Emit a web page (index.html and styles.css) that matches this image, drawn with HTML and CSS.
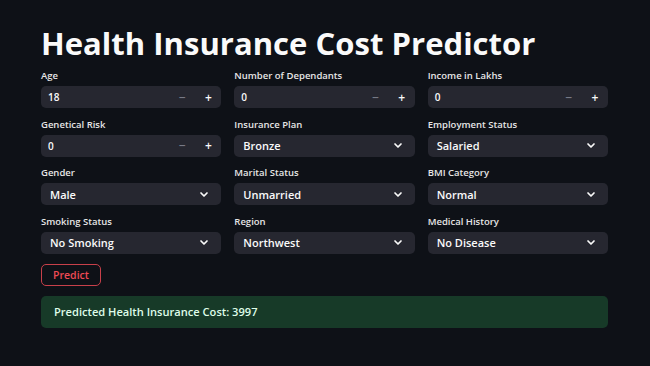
FILE: index.html
```html
<!DOCTYPE html>
<html>
<head>
<meta charset="utf-8">
<link rel="stylesheet" href="styles.css">
</head>
<body>
<main class="app">
  <h1 class="title">Health Insurance Cost Predictor</h1>
  <div class="grid">
    <div class="field">
      <label class="label">Age</label>
      <div class="box num"><span class="val">18</span><span class="step minus">−</span><span class="step plus">+</span></div>
    </div>
    <div class="field">
      <label class="label">Number of Dependants</label>
      <div class="box num"><span class="val">0</span><span class="step minus">−</span><span class="step plus">+</span></div>
    </div>
    <div class="field">
      <label class="label">Income in Lakhs</label>
      <div class="box num"><span class="val">0</span><span class="step minus">−</span><span class="step plus">+</span></div>
    </div>

    <div class="field">
      <label class="label">Genetical Risk</label>
      <div class="box num"><span class="val">0</span><span class="step minus">−</span><span class="step plus">+</span></div>
    </div>
    <div class="field">
      <label class="label">Insurance Plan</label>
      <div class="box sel"><span class="sval">Bronze</span><svg class="chev" viewBox="0 0 8 5"><path d="M1 1 L4 4 L7 1"/></svg></div>
    </div>
    <div class="field">
      <label class="label">Employment Status</label>
      <div class="box sel"><span class="sval">Salaried</span><svg class="chev" viewBox="0 0 8 5"><path d="M1 1 L4 4 L7 1"/></svg></div>
    </div>

    <div class="field">
      <label class="label">Gender</label>
      <div class="box sel"><span class="sval">Male</span><svg class="chev" viewBox="0 0 8 5"><path d="M1 1 L4 4 L7 1"/></svg></div>
    </div>
    <div class="field">
      <label class="label">Marital Status</label>
      <div class="box sel"><span class="sval">Unmarried</span><svg class="chev" viewBox="0 0 8 5"><path d="M1 1 L4 4 L7 1"/></svg></div>
    </div>
    <div class="field">
      <label class="label">BMI Category</label>
      <div class="box sel"><span class="sval">Normal</span><svg class="chev" viewBox="0 0 8 5"><path d="M1 1 L4 4 L7 1"/></svg></div>
    </div>

    <div class="field">
      <label class="label">Smoking Status</label>
      <div class="box sel"><span class="sval">No Smoking</span><svg class="chev" viewBox="0 0 8 5"><path d="M1 1 L4 4 L7 1"/></svg></div>
    </div>
    <div class="field">
      <label class="label">Region</label>
      <div class="box sel"><span class="sval">Northwest</span><svg class="chev" viewBox="0 0 8 5"><path d="M1 1 L4 4 L7 1"/></svg></div>
    </div>
    <div class="field">
      <label class="label">Medical History</label>
      <div class="box sel"><span class="sval">No Disease</span><svg class="chev" viewBox="0 0 8 5"><path d="M1 1 L4 4 L7 1"/></svg></div>
    </div>
  </div>
  <button class="btn">Predict</button>
  <div class="success">Predicted Health Insurance Cost: 3997</div>
</main>
</body>
</html>
```

FILE: styles.css
```css
html, body {
  margin: 0;
  padding: 0;
  background: #0e1117;
  color: #fafafa;
  font-family: "Open Sans", "DejaVu Sans", sans-serif;
}
.app {
  width: 567px;
  padding: 25px 0 0 41px;
}
.title {
  margin: 0;
  font-size: 31px;
  line-height: 37px;
  font-weight: 700;
  letter-spacing: 0.03px;
  color: #fafafa;
}
.grid {
  margin-top: 8px;
  display: grid;
  grid-template-columns: repeat(3, 1fr);
  column-gap: 13px;
  row-gap: 10.5px;
}
.field {
  display: flex;
  flex-direction: column;
}
.label {
  font-size: 9.5px;
  line-height: 12px;
  font-weight: 600;
  color: #e6e6e6;
  margin-bottom: 4px;
}
.box {
  height: 22px;
  background: #262730;
  border-radius: 5px;
  display: flex;
  align-items: center;
}
.num .val {
  flex: 1;
  padding-left: 7px;
  font-size: 10px;
  font-weight: 600;
}
.step {
  width: 26px;
  text-align: center;
  font-size: 12px;
  font-weight: 600;
}
.minus { color: #777a86; }
.plus { color: #fafafa; }
.sel {
  padding: 0 13px 0 9px;
  justify-content: space-between;
}
.sval {
  font-size: 11px;
  font-weight: 600;
}
.chev {
  width: 8px;
  height: 5px;
  fill: none;
  stroke: #fafafa;
  stroke-width: 1.7;
  stroke-linecap: round;
  stroke-linejoin: round;
  overflow: visible;
}
.btn {
  display: block;
  margin-top: 10px;
  width: 60px;
  height: 22px;
  padding: 0;
  background: transparent;
  border: 1px solid #c8404a;
  border-radius: 5px;
  color: #ef4a55;
  font-family: inherit;
  font-size: 10.5px;
  font-weight: 600;
}
.success {
  margin-top: 10px;
  height: 32px;
  box-sizing: border-box;
  padding: 0 13px;
  display: flex;
  align-items: center;
  background: #173a28;
  border-radius: 5px;
  color: #dffde9;
  font-size: 11.1px;
  font-weight: 600;
}
```
